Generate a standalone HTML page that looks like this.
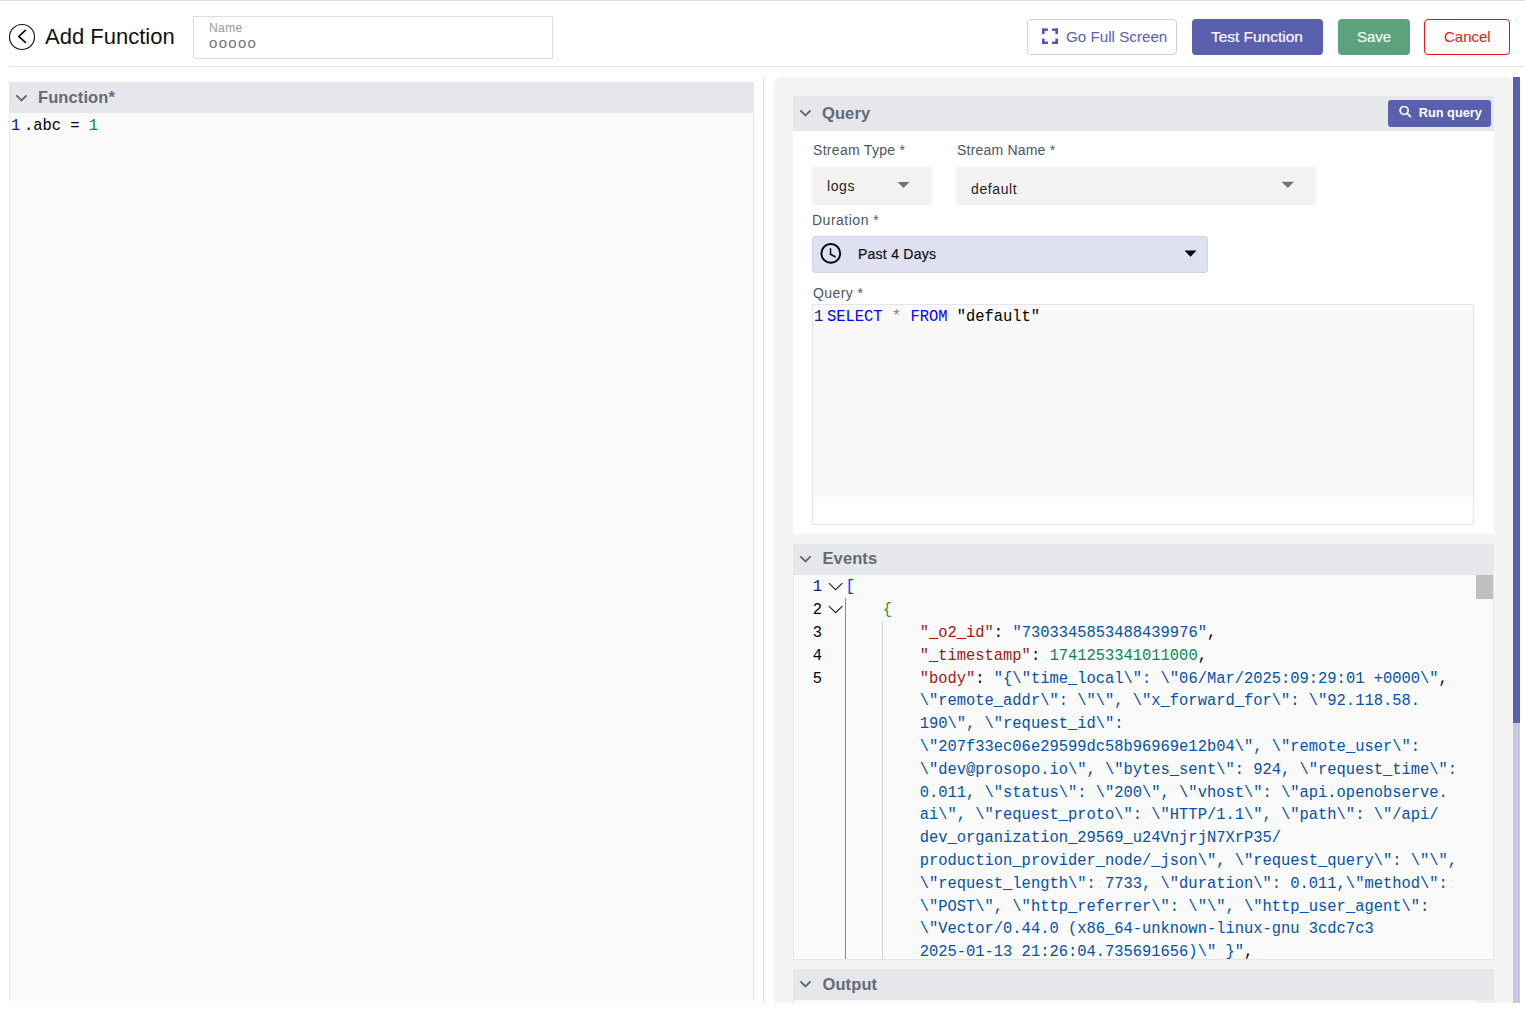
<!DOCTYPE html>
<html><head><meta charset="utf-8">
<style>
html,body{margin:0;padding:0;width:1525px;height:1030px;overflow:hidden;background:#fff;font-family:"Liberation Sans",sans-serif;}
.a{position:absolute;}
.t{position:absolute;white-space:pre;line-height:1;}
.mono{font-family:"Liberation Mono",monospace;transform:scaleY(1.09);transform-origin:0 0;}
.hdr{position:absolute;background:#e5e7eb;}
.hdr .lbl{position:absolute;font-weight:bold;font-size:16.5px;color:#636a78;white-space:pre;line-height:1;letter-spacing:0.1px;}
.chev{position:absolute;}
.k{color:#a31515}.s{color:#0451a5}.n{color:#098658}
</style></head><body>
<!-- top line -->
<div class="a" style="left:0;top:0;width:1525px;height:1px;background:#dadada"></div>

<!-- back icon -->
<svg class="a" style="left:0;top:0" width="60" height="66" viewBox="0 0 60 66">
  <circle cx="22" cy="37" r="12.5" fill="none" stroke="#111" stroke-width="1.15"/>
  <path d="M25.9 29.9 L18.8 36.4 L25.9 42.8" fill="none" stroke="#000" stroke-width="1.6" stroke-linejoin="miter"/>
</svg>
<div class="t" id="title" style="left:45px;top:26px;font-size:22px;color:#111">Add Function</div>

<!-- name field -->
<div class="a" style="left:193px;top:16px;width:358px;height:41px;border:1px solid #dcdcdc;border-radius:1px"></div>
<div class="t" style="left:209px;top:22px;font-size:12px;color:#9a9a9a;letter-spacing:0.4px">Name</div>
<div class="t" style="left:209px;top:35px;font-size:15px;color:#747474;letter-spacing:1.3px">ooooo</div>

<!-- buttons -->
<div class="a" style="left:1027px;top:19px;width:148px;height:34px;border:1px solid #d2d2d2;border-radius:4px"></div>
<svg class="a" style="left:1042px;top:28px" width="17" height="17" viewBox="0 0 17 17" fill="#4f55b0">
  <rect x="0" y="0.5" width="6" height="2.4"/><rect x="0" y="0.5" width="2.6" height="5.5"/>
  <rect x="10" y="0.5" width="6" height="2.4"/><rect x="13.4" y="0.5" width="2.6" height="5.5"/>
  <rect x="0" y="13.6" width="6" height="2.4"/><rect x="0" y="10.6" width="2.6" height="5.4"/>
  <rect x="10" y="13.6" width="6" height="2.4"/><rect x="13.4" y="10.6" width="2.6" height="5.4"/>
</svg>
<div class="t" style="left:1066px;top:29px;font-size:15.2px;color:#5960b0">Go Full Screen</div>

<div class="a" style="left:1192px;top:19px;width:131px;height:36px;background:#5a5fae;border-radius:4px"></div>
<div class="t" style="left:1211px;top:29px;font-size:15.45px;color:#fff;-webkit-text-stroke:0.2px #fff">Test Function</div>

<div class="a" style="left:1338px;top:19px;width:72px;height:36px;background:#5ba27d;border-radius:4px"></div>
<div class="t" style="left:1357px;top:29px;font-size:15px;color:#fff;-webkit-text-stroke:0.15px #fff">Save</div>

<div class="a" style="left:1424px;top:19px;width:84px;height:34px;border:1px solid #e81818;border-radius:4px"></div>
<div class="t" style="left:1444px;top:29px;font-size:15px;color:#e81818">Cancel</div>

<!-- header separator -->
<div class="a" style="left:9px;top:66px;width:1516px;height:1px;background:#e0e0e0"></div>

<!-- LEFT PANEL -->
<div class="hdr" style="left:9px;top:82px;width:745px;height:31px">
  <svg class="chev" style="left:6px;top:12px" width="14" height="9" viewBox="0 0 14 9"><path d="M1.4 1.4 L6.5 6.5 L11.6 1.4" fill="none" stroke="#5f6675" stroke-width="1.9"/></svg>
  <div class="lbl" style="left:29px;top:6.6px">Function*</div>
</div>
<div class="a" style="left:9px;top:113px;width:743px;height:888px;background:#fafafa;border-left:1px solid #e6e6ec;border-right:1px solid #e6e6ec"></div>
<div class="t mono" style="left:11px;top:118px;font-size:15.45px;color:#0b216f">1</div>
<div class="t mono" style="left:24px;top:118px;font-size:15.45px;color:#000">.abc = <span style="color:#098658">1</span></div>

<!-- divider -->
<div class="a" style="left:763px;top:77px;width:1px;height:926px;background:#dddddd"></div>

<!-- RIGHT PANEL -->
<div class="a" style="left:774px;top:77px;width:739px;height:926px;background:#f4f4f4;border-radius:8px 8px 0 0"></div>
<div class="a" style="left:1513px;top:77px;width:7px;height:646px;background:#5a5fae"></div>
<div class="a" style="left:1513px;top:723px;width:7px;height:280px;background:#c5c7e5"></div>

<!-- Query section -->
<div class="hdr" style="left:793px;top:96px;width:701px;height:35px">
  <svg class="chev" style="left:6px;top:13px" width="14" height="9" viewBox="0 0 14 9"><path d="M1.4 1.4 L6.5 6.5 L11.6 1.4" fill="none" stroke="#5f6675" stroke-width="1.9"/></svg>
  <div class="lbl" style="left:29px;top:9px">Query</div>
</div>
<div class="a" style="left:1388px;top:100px;width:103px;height:27px;background:#5a5fae;border-radius:3px"></div>
<svg class="a" style="left:1399px;top:106px" width="14" height="13" viewBox="0 0 14 13"><circle cx="5.1" cy="4.4" r="4.0" fill="none" stroke="#fff" stroke-width="1.7"/><path d="M7.9 7.2 L11.9 11.2" stroke="#fff" stroke-width="1.9"/></svg>
<div class="t" style="left:1418.7px;top:106.5px;font-size:12.8px;font-weight:bold;color:#fff">Run query</div>

<div class="a" style="left:793px;top:131px;width:701px;height:403px;background:#fff"></div>

<!-- query body content -->
<div class="t" style="left:813px;top:143px;font-size:14px;color:#4b5563;letter-spacing:0.3px">Stream Type *</div>
<div class="a" style="left:812px;top:167px;width:120px;height:38px;background:#f2f2f2"></div>
<div class="t" style="left:827px;top:179px;font-size:14px;color:#1f1f1f;letter-spacing:0.6px">logs</div>
<svg class="a" style="left:897px;top:181px" width="13" height="8" viewBox="0 0 13 8"><path d="M0.5 1 H12.5 L6.5 7 Z" fill="#737373"/></svg>

<div class="t" style="left:957px;top:143px;font-size:14px;color:#4b5563;letter-spacing:0.2px">Stream Name *</div>
<div class="a" style="left:956px;top:167px;width:360px;height:38px;background:#f2f2f2"></div>
<div class="t" style="left:971px;top:182px;font-size:14px;color:#1f1f1f;letter-spacing:0.6px">default</div>
<svg class="a" style="left:1281px;top:181px" width="14" height="8" viewBox="0 0 14 8"><path d="M0.5 0.8 H13 L6.8 7 Z" fill="#737373"/></svg>

<div class="t" style="left:812px;top:213px;font-size:14px;color:#4b5563;letter-spacing:0.5px">Duration *</div>
<div class="a" style="left:812px;top:236px;width:394px;height:35px;background:#dfe0f1;border:1px solid #d3d4e6;border-radius:3px"></div>
<svg class="a" style="left:819px;top:242px" width="24" height="24" viewBox="0 0 24 24"><circle cx="11.8" cy="11.4" r="9.4" fill="none" stroke="#000" stroke-width="1.9"/><path d="M11.5 6.3 V12.2 L16.6 15" fill="none" stroke="#000" stroke-width="1.5"/></svg>
<div class="t" style="left:858px;top:247px;font-size:14px;color:#111;-webkit-text-stroke:0.2px #111;letter-spacing:0.25px">Past 4 Days</div>
<svg class="a" style="left:1184px;top:250px" width="13" height="8" viewBox="0 0 13 8"><path d="M0.5 0.5 H12.5 L6.5 6.8 Z" fill="#000"/></svg>

<div class="t" style="left:813px;top:285.7px;font-size:14px;color:#4b5563;letter-spacing:0.4px">Query *</div>
<div class="a" style="left:812px;top:304px;width:660px;height:219px;background:#fff;border:1px solid #e4e4ea"></div>
<div class="a" style="left:813px;top:305px;width:660px;height:192px;background:#f9f9f9"></div>
<div class="t mono" style="left:814px;top:309px;font-size:15.45px;color:#0b216f">1</div>
<div class="t mono" style="left:827px;top:309px;font-size:15.45px;color:#000"><span style="color:#0000ff">SELECT</span> <span style="color:#778899">*</span> <span style="color:#0000ff">FROM</span> "default"</div>

<!-- Events section -->
<div class="hdr" style="left:793px;top:544px;width:701px;height:31px">
  <svg class="chev" style="left:6px;top:11px" width="14" height="9" viewBox="0 0 14 9"><path d="M1.4 1.4 L6.5 6.5 L11.6 1.4" fill="none" stroke="#5f6675" stroke-width="1.9"/></svg>
  <div class="lbl" style="left:29.5px;top:6px">Events</div>
</div>
<div class="a" style="left:793px;top:575px;width:699px;height:384px;background:#fafafa;border:1px solid #e4e4ea;border-top:none"></div>
<div class="a" style="left:1476px;top:575px;width:17px;height:24px;background:#bfbfbf"></div>
<div class="a" style="left:845px;top:598px;width:1px;height:361px;background:#8a8a8a"></div>
<div class="a" style="left:882px;top:621px;width:1px;height:338px;background:#d3d3d3"></div>
<div class="t mono" style="left:812.7px;top:579.3px;font-size:15.45px;color:#0b216f">1</div>
<div class="t mono" style="left:845.6px;top:579.3px;font-size:15.45px;color:#000"><span style="color:#0431fa">[</span></div>
<div class="t mono" style="left:812.7px;top:602.1px;font-size:15.45px;color:#000">2</div>
<div class="t mono" style="left:845.6px;top:602.1px;font-size:15.45px;color:#000">    <span style="color:#319331">{</span></div>
<div class="t mono" style="left:812.7px;top:624.9px;font-size:15.45px;color:#000">3</div>
<div class="t mono" style="left:845.6px;top:624.9px;font-size:15.45px;color:#000">        <span class="k">"_o2_id"</span>: <span class="s">"7303345853488439976"</span>,</div>
<div class="t mono" style="left:812.7px;top:647.7px;font-size:15.45px;color:#000">4</div>
<div class="t mono" style="left:845.6px;top:647.7px;font-size:15.45px;color:#000">        <span class="k">"_timestamp"</span>: <span class="n">1741253341011000</span>,</div>
<div class="t mono" style="left:812.7px;top:670.5px;font-size:15.45px;color:#000">5</div>
<div class="t mono" style="left:845.6px;top:670.5px;font-size:15.45px;color:#000">        <span class="k">"body"</span>: <span class="s">&quot;{\&quot;time_local\&quot;: \&quot;06/Mar/2025:09:29:01 +0000\&quot;</span>,</div>
<div class="t mono" style="left:845.6px;top:693.3px;font-size:15.45px;color:#000">        <span class="s">\&quot;remote_addr\&quot;: \&quot;\&quot;, \&quot;x_forward_for\&quot;: \&quot;92.118.58.</span></div>
<div class="t mono" style="left:845.6px;top:716.1px;font-size:15.45px;color:#000">        <span class="s">190\&quot;, \&quot;request_id\&quot;:</span></div>
<div class="t mono" style="left:845.6px;top:738.9px;font-size:15.45px;color:#000">        <span class="s">\&quot;207f33ec06e29599dc58b96969e12b04\&quot;, \&quot;remote_user\&quot;:</span></div>
<div class="t mono" style="left:845.6px;top:761.7px;font-size:15.45px;color:#000">        <span class="s">\&quot;dev@prosopo.io\&quot;, \&quot;bytes_sent\&quot;: 924, \&quot;request_time\&quot;:</span></div>
<div class="t mono" style="left:845.6px;top:784.5px;font-size:15.45px;color:#000">        <span class="s">0.011, \&quot;status\&quot;: \&quot;200\&quot;, \&quot;vhost\&quot;: \&quot;api.openobserve.</span></div>
<div class="t mono" style="left:845.6px;top:807.3px;font-size:15.45px;color:#000">        <span class="s">ai\&quot;, \&quot;request_proto\&quot;: \&quot;HTTP/1.1\&quot;, \&quot;path\&quot;: \&quot;/api/</span></div>
<div class="t mono" style="left:845.6px;top:830.1px;font-size:15.45px;color:#000">        <span class="s">dev_organization_29569_u24VnjrjN7XrP35/</span></div>
<div class="t mono" style="left:845.6px;top:852.9px;font-size:15.45px;color:#000">        <span class="s">production_provider_node/_json\&quot;, \&quot;request_query\&quot;: \&quot;\&quot;,</span></div>
<div class="t mono" style="left:845.6px;top:875.7px;font-size:15.45px;color:#000">        <span class="s">\&quot;request_length\&quot;: 7733, \&quot;duration\&quot;: 0.011,\&quot;method\&quot;:</span></div>
<div class="t mono" style="left:845.6px;top:898.5px;font-size:15.45px;color:#000">        <span class="s">\&quot;POST\&quot;, \&quot;http_referrer\&quot;: \&quot;\&quot;, \&quot;http_user_agent\&quot;:</span></div>
<div class="t mono" style="left:845.6px;top:921.3px;font-size:15.45px;color:#000">        <span class="s">\&quot;Vector/0.44.0 (x86_64-unknown-linux-gnu 3cdc7c3</span></div>
<div class="t mono" style="left:845.6px;top:944.1px;font-size:15.45px;color:#000">        <span class="s">2025-01-13 21:26:04.735691656)\&quot; }&quot;</span>,</div>
<svg class="a" style="left:828px;top:582.3px" width="16" height="10" viewBox="0 0 16 10"><path d="M0.9 1.2 L7.6 7.6 L14.4 1.2" fill="none" stroke="#222" stroke-width="1.15"/></svg>
<svg class="a" style="left:828px;top:605.1px" width="16" height="10" viewBox="0 0 16 10"><path d="M0.9 1.2 L7.6 7.6 L14.4 1.2" fill="none" stroke="#222" stroke-width="1.15"/></svg>

<!-- Output section -->
<div class="hdr" style="left:793px;top:969px;width:701px;height:31px">
  <svg class="chev" style="left:6px;top:11px" width="14" height="9" viewBox="0 0 14 9"><path d="M1.4 1.4 L6.5 6.5 L11.6 1.4" fill="none" stroke="#5f6675" stroke-width="1.9"/></svg>
  <div class="lbl" style="left:29.5px;top:7px">Output</div>
</div>
<div class="a" style="left:793px;top:1000px;width:699px;height:3px;background:#fafafa;border-left:1px solid #e4e4ea;border-right:1px solid #e4e4ea"></div>
<div class="a" style="left:1476px;top:1000px;width:17px;height:3px;background:#efefef"></div>
</body></html>
